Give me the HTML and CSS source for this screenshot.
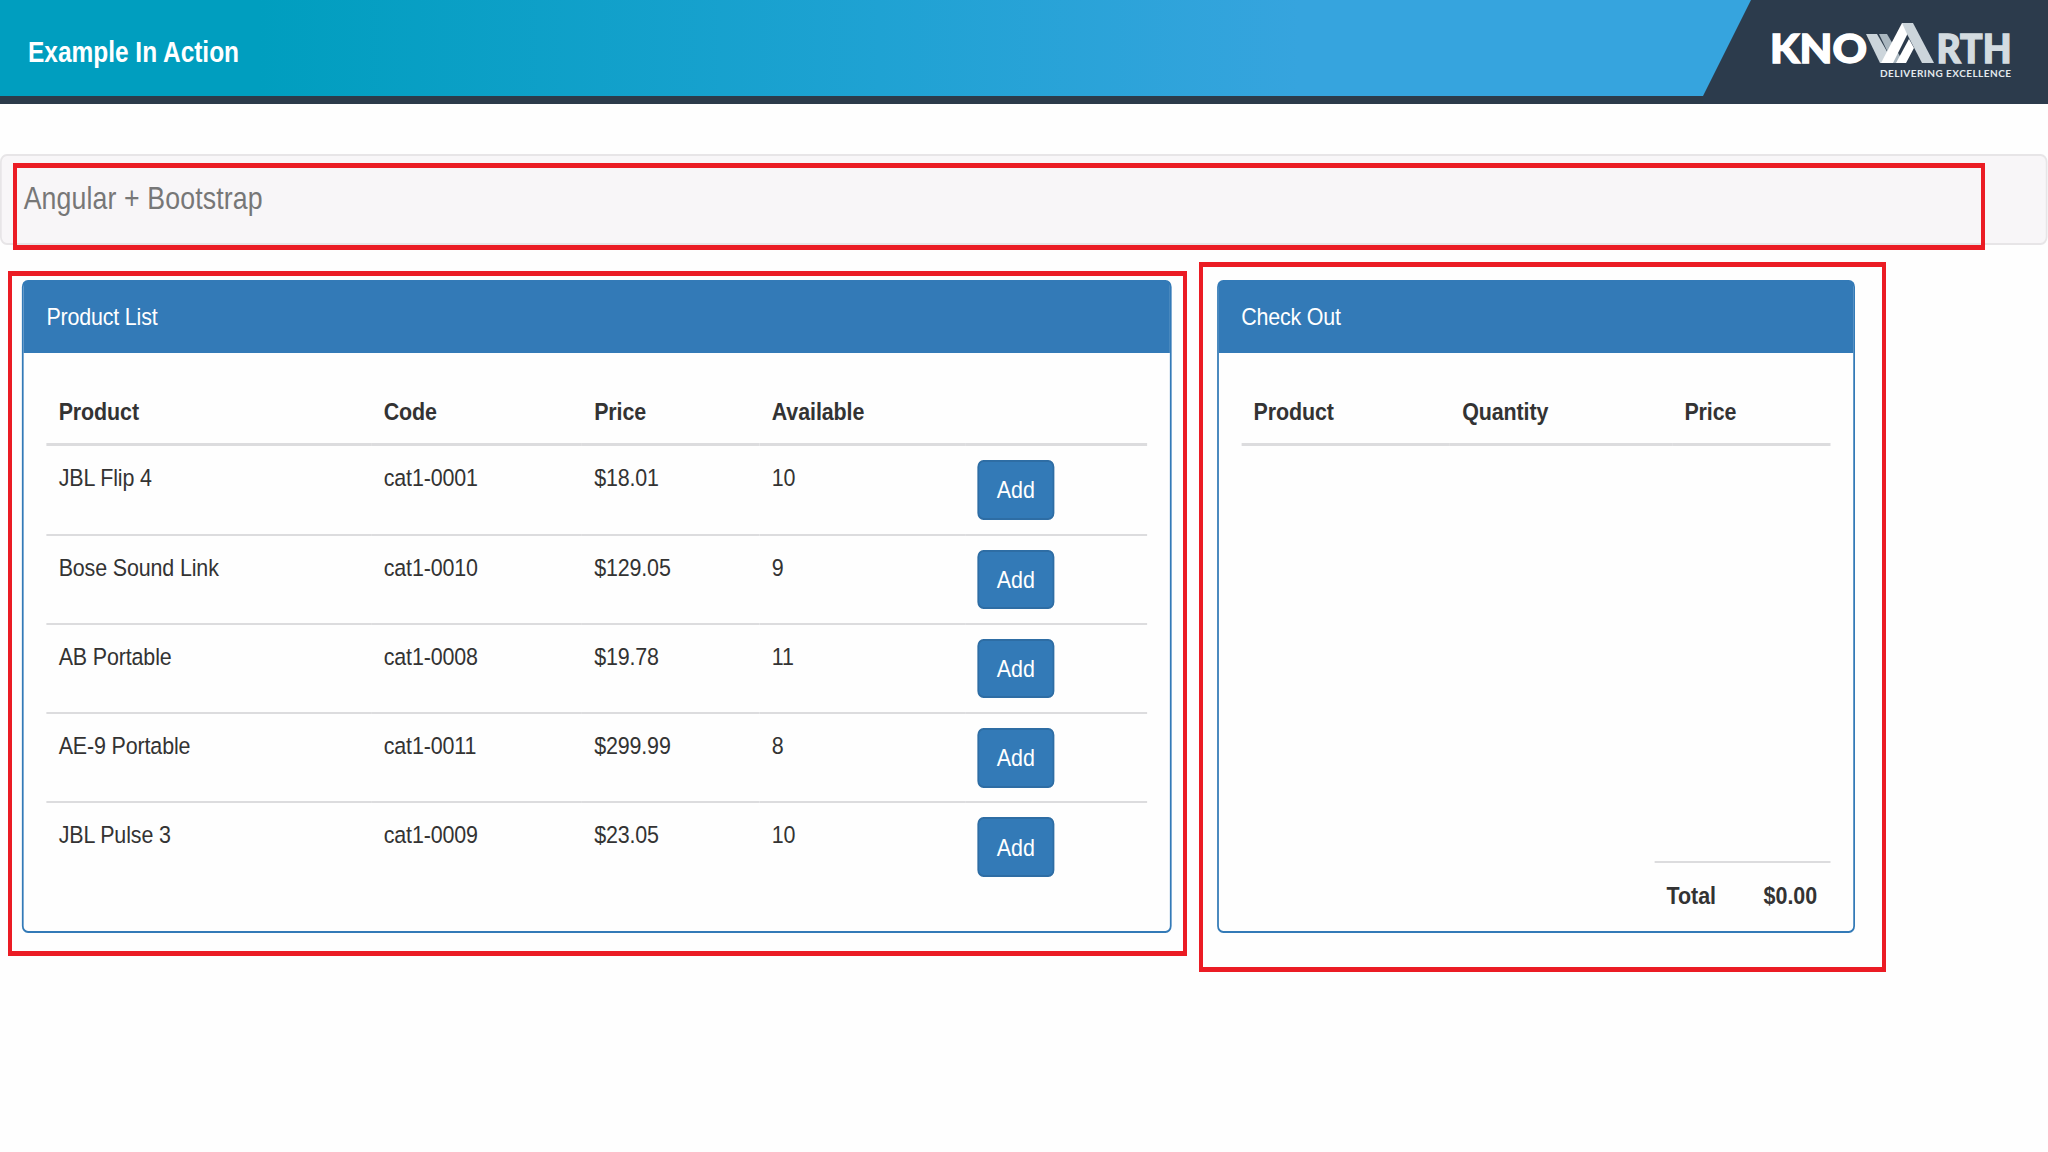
FILE: index.html
```
<!DOCTYPE html>
<html lang="en">
<head>
  <meta charset="UTF-8">
  <title>Example In Action</title>
  <link rel="stylesheet" href="styles.css">
</head>
<body>
  <header class="slide-header">
    <h1>Example In Action</h1>
    <svg class="logo" width="345" height="104" viewBox="0 0 345 104">
      <polygon class="logo-bg" points="48,0 345,0 345,104 0,104 0,96" />
      <text class="logo-name" x="67" y="62.5" textLength="97" lengthAdjust="spacingAndGlyphs">KNO</text>
      <!-- folded W / A ribbon -->
      <polygon class="ribbon-mid" points="163,34 174,34 186,55 182,63 177,63" />
      <polygon class="ribbon-dark" points="176,34 184,34 201,63 190,63" />
      <polygon class="ribbon-light" points="178,63 199,23 210,23 190,63" />
      <polygon class="ribbon-light" points="193,63 206,39 211,48 203,63" />
      <polygon class="ribbon-mid" points="199,23 210,23 231,63 219,63 204,34" />
      <text class="logo-name logo-name-dim" x="233.5" y="62.5" textLength="75" lengthAdjust="spacingAndGlyphs">RTH</text>
      <text class="logo-tagline" x="177" y="76.5" textLength="131">DELIVERING EXCELLENCE</text>
    </svg>
  </header>

  <div class="app-frame">
  <main class="app">
    <nav class="navbar">Angular + Bootstrap</nav>
    <div class="panels">
      <section class="panel products">
        <div class="panel-heading">Product List</div>
        <div class="panel-body">
          <table>
            <colgroup>
              <col class="col-name"><col class="col-code"><col class="col-price"><col class="col-stock"><col>
            </colgroup>
            <thead>
              <tr><th>Product</th><th>Code</th><th>Price</th><th>Available</th><th></th></tr>
            </thead>
            <tbody>
              <tr><td>JBL Flip 4</td><td>cat1-0001</td><td>$18.01</td><td>10</td><td><button>Add</button></td></tr>
              <tr><td>Bose Sound Link</td><td>cat1-0010</td><td>$129.05</td><td>9</td><td><button>Add</button></td></tr>
              <tr><td>AB Portable</td><td>cat1-0008</td><td>$19.78</td><td>11</td><td><button>Add</button></td></tr>
              <tr><td>AE-9 Portable</td><td>cat1-0011</td><td>$299.99</td><td>8</td><td><button>Add</button></td></tr>
              <tr><td>JBL Pulse 3</td><td>cat1-0009</td><td>$23.05</td><td>10</td><td><button>Add</button></td></tr>
            </tbody>
          </table>
        </div>
      </section>

      <section class="panel checkout">
        <div class="panel-heading">Check Out</div>
        <div class="panel-body">
          <table>
            <colgroup>
              <col class="col-item"><col class="col-qty"><col>
            </colgroup>
            <thead>
              <tr><th>Product</th><th>Quantity</th><th>Price</th></tr>
            </thead>
          </table>
          <div class="total">
            <span class="total-label">Total</span>
            <span>$0.00</span>
          </div>
        </div>
      </section>
    </div>
  </main>
  </div>

  <div class="highlight highlight-nav"></div>
  <div class="highlight highlight-products"></div>
  <div class="highlight highlight-checkout"></div>
</body>
</html>
```
FILE: styles.css
```
* {
  box-sizing: border-box;
}
body {
  margin: 0;
  height: 1152px;
  position: relative;
  background: #fefefe;
  color: #333;
  font-family: "Liberation Sans", Arial, sans-serif;
}

/* header */
.slide-header {
  height: 104px;
  display: flex;
  justify-content: space-between;
  background: linear-gradient(90deg, #009ebf 0, #009ebf 260px, #1fa2d3 880px, #36a4de 1300px, #36a4de 100%);
  border-bottom: 8px solid #2c3b4a;
}
.slide-header h1 {
  margin: 0 0 0 27.5px;
  line-height: 104px;
  font-size: 30px;
  color: #fff;
  transform: scaleX(0.815);
  transform-origin: left;
}
.logo {
  flex: none;
  display: block;
}
.logo-bg {
  fill: #2c3b4c;
}
.logo-name {
  font-family: Lato, sans-serif;
  font-weight: 900;
  font-size: 40px;
  fill: #fff;
  stroke: #fff;
  stroke-width: 1.4px;
}
.logo-name-dim {
  fill: #d3dbe0;
  stroke: #d3dbe0;
}
.logo-tagline {
  font-family: Lato, sans-serif;
  font-weight: 700;
  font-size: 10px;
  fill: #e3e9ee;
}
.ribbon-light {
  fill: #fff;
}
.ribbon-mid {
  fill: #ccd5db;
}
.ribbon-dark {
  fill: #aab7c0;
}

/* the app is wide and squeezed sideways */
.app-frame {
  width: 100%;
  overflow: hidden;
}
.app {
  width: 2340px;
  padding-top: 50px;
  font-size: 24.5px;
  line-height: 35px;
  transform: scaleX(0.875);
  transform-origin: left top;
}
.navbar {
  height: 91px;
  padding: 25px 25px;
  background: #f8f6f8;
  border: 2px solid #e7e5e7;
  border-radius: 8px;
  color: #777;
  font-size: 30.5px;
  letter-spacing: 0.15px;
}
.panels {
  display: flex;
  gap: 51.5px;
  padding: 35px 0 0 25px;
}
.panel {
  height: 653px;
  display: flex;
  flex-direction: column;
  background: #fefefe;
  border: 2px solid #337ab7;
  border-radius: 7px;
}
.products {
  width: 1314px;
}
.checkout {
  width: 729px;
}
.panel-heading {
  height: 71px;
  padding: 17px 26px;
  background: #337ab7;
  color: #fff;
  letter-spacing: -0.2px;
}
.panel-body {
  flex: 1;
  display: flex;
  flex-direction: column;
  justify-content: space-between;
  padding: 26px 26px 3px;
}
table {
  width: 100%;
  table-layout: fixed;
  border-collapse: separate;
  border-spacing: 0;
}
th,
td {
  padding: 14px 13px 13px 14px;
  text-align: left;
  vertical-align: top;
}
th {
  height: 67px;
  padding-top: 15px;
  border-bottom: 3px solid #dcdcde;
  letter-spacing: -0.1px;
}
td {
  height: 89.3px;
  border-top: 2px solid #dcdcde;
  letter-spacing: -0.15px;
}
tbody tr:first-child td {
  height: 87.5px;
  border-top: none;
}
.col-name { width: 371.5px; }
.col-code { width: 240.5px; }
.col-price { width: 203px; }
.col-stock { width: 235px; }
.col-item { width: 238.5px; }
.col-qty { width: 254px; }

button {
  display: block;
  width: 88px;
  height: 59.5px;
  padding: 0;
  background: #337ab7;
  border: 2px solid #2e6da4;
  border-radius: 7px;
  color: #fff;
  font: inherit;
}
.total {
  align-self: flex-end;
  width: 201px;
  padding: 15px 14px;
  display: flex;
  border-top: 2px solid #dcdcde;
  font-weight: bold;
}
.total-label {
  width: 111px;
}

/* red call-out frames */
.highlight {
  position: absolute;
  border: solid #eb1c24;
  border-width: 5px 4px;
}
.highlight-nav {
  left: 13px;
  top: 163px;
  width: 1972px;
  height: 87px;
}
.highlight-products {
  left: 8px;
  top: 271px;
  width: 1179px;
  height: 685px;
}
.highlight-checkout {
  left: 1199px;
  top: 262px;
  width: 687px;
  height: 710px;
}
```
